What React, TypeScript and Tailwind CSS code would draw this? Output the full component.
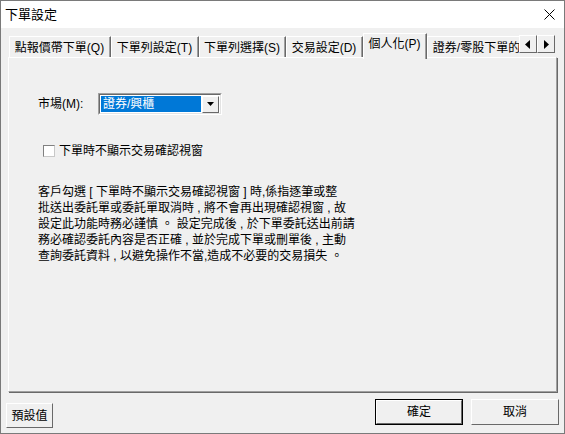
import React from 'react';

const font = "font-['Liberation_Sans','Noto_Sans_CJK_TC',sans-serif]";

interface Tab {
  label: string;
  width: string;
  active?: boolean;
}

const tabs: Tab[] = [
  { label: '點報價帶下單(Q)', width: 'w-[102px]' },
  { label: '下單列設定(T)', width: 'w-[88px]' },
  { label: '下單列選擇(S)', width: 'w-[87px]' },
  { label: '交易設定(D)', width: 'w-[77px]' },
  { label: '個人化(P)', width: 'w-[64px]', active: true },
  { label: '證券/零股下單的', width: 'w-[100px]' },
];

const notice = [
  '客戶勾選 [ 下單時不顯示交易確認視窗 ] 時,係指逐筆或整',
  '批送出委託單或委託單取消時 , 將不會再出現確認視窗 , 故',
  '設定此功能時務必謹慎 。 設定完成後 , 於下單委託送出前請',
  '務必確認委託內容是否正確 , 並於完成下單或刪單後 , 主動',
  '查詢委託資料 , 以避免操作不當,造成不必要的交易損失 。',
];

function TabItem({ tab }: { tab: Tab }) {
  if (tab.active) {
    return (
      <div className={`${tab.width} h-[26px] -mb-[2px] relative z-10 shrink-0 bg-[#f0f0f0] border-t border-l border-r border-t-white border-l-white border-r-[#696969]`}>
        <div className="h-full border-r border-r-[#a0a0a0] flex justify-center pt-[2px] leading-[16px] text-[12px] whitespace-nowrap">
          {tab.label}
        </div>
      </div>
    );
  }
  return (
    <div className={`${tab.width} h-[21px] shrink-0 bg-[#f0f0f0] border-t border-l border-r border-t-white border-l-white border-r-[#696969]`}>
      <div className="h-full border-r border-r-[#a0a0a0] flex justify-center pt-[3px] leading-[16px] text-[12px] whitespace-nowrap overflow-hidden">
        {tab.label}
      </div>
    </div>
  );
}

function ArrowButton({ dir }: { dir: 'left' | 'right' }) {
  return (
    <div className="w-[18px] h-[18px] bg-[#f0f0f0] border border-t-white border-l-white border-r-[#696969] border-b-[#696969] flex items-center justify-center">
      <svg width="6" height="9" viewBox="0 0 6 9">
        {dir === 'left' ? <polygon points="5,0 5,9 0,4.5" fill="#000" /> : <polygon points="1,0 1,9 6,4.5" fill="#000" />}
      </svg>
    </div>
  );
}

function Button({ label, primary, className }: { label: string; primary?: boolean; className: string }) {
  return (
    <div className={`${className} ${primary ? 'border border-[#000]' : ''}`}>
      <div className="h-full w-full bg-[#f0f0f0] border border-t-white border-l-white border-r-[#696969] border-b-[#696969] flex items-center justify-center text-[12px] leading-[16px]">
        {label}
      </div>
    </div>
  );
}

export default function App() {
  return (
    <div className={`${font} w-[565px] h-[434px] bg-[#f0f0f0] border border-[#7a7a7a] text-black flex flex-col overflow-hidden`}>
      {/* Title bar */}
      <div className="h-[27px] bg-white flex items-center justify-between pl-[4px] pr-[9px] shrink-0">
        <span className="text-[13px] leading-[16px]">下單設定</span>
        <svg width="11" height="11" viewBox="0 0 11 11">
          <path d="M0.5 0.5 L10.5 10.5 M10.5 0.5 L0.5 10.5" stroke="#000" strokeWidth="1" />
        </svg>
      </div>

      {/* Tab strip */}
      <div className="mt-[5px] h-[24px] pl-[8px] flex items-end shrink-0 relative z-10">
        <div className="w-[510px] h-full flex items-end overflow-x-clip shrink-0">
          {tabs.map((t) => (
            <TabItem key={t.label} tab={t} />
          ))}
        </div>
        <div className="self-start mt-[2px] flex">
          <ArrowButton dir="left" />
          <ArrowButton dir="right" />
        </div>
      </div>

      {/* Panel */}
      <div className="ml-[7px] w-[549px] h-[335px] shrink-0 border border-t-white border-l-white border-r-[#a0a0a0] border-b-[#a0a0a0] shadow-[1px_1px_0_#696969] flex flex-col">
        <div className="mt-[35px] pl-[29px] flex items-center">
          <span className="text-[12px] leading-[16px] w-[60px]">市場(M):</span>
          <div className="w-[124px] h-[22px] border border-t-[#a0a0a0] border-l-[#a0a0a0] border-r-white border-b-white">
            <div className="h-full border border-t-[#696969] border-l-[#696969] border-r-[#e3e3e3] border-b-[#e3e3e3] bg-white flex items-center pl-[1px] pr-[1px]">
              <div className="w-[101px] h-[16px] bg-[#0078d7] text-white text-[12px] leading-[16px] pl-[2px]">證券/興櫃</div>
              <div className="ml-[1px] w-[17px] h-[17px] bg-[#f0f0f0] border border-t-white border-l-white border-r-[#696969] border-b-[#696969] flex items-center justify-center">
                <svg width="7" height="4" viewBox="0 0 7 4">
                  <polygon points="0,0 7,0 3.5,4" fill="#000" />
                </svg>
              </div>
            </div>
          </div>
        </div>

        <div className="mt-[28px] pl-[34px] flex items-center">
          <div className="w-[12px] h-[12px] bg-white border border-t-[#808080] border-l-[#808080] border-r-[#c8c8c8] border-b-[#c8c8c8]" />
          <span className="ml-[4px] text-[12px] leading-[16px]">下單時不顯示交易確認視窗</span>
        </div>

        <div className="mt-[25px] pl-[29px] flex flex-col">
          {notice.map((line) => (
            <div key={line} className="text-[12px] leading-[16px] whitespace-pre">
              {line}
            </div>
          ))}
        </div>
      </div>

      {/* Buttons */}
      <div className="flex items-start pl-[5px] mt-[7px]">
        <Button label="預設值" className="mt-[4px] w-[47px] h-[25px]" />
        <div className="ml-auto flex gap-[8px] pr-[5px]">
          <Button label="確定" primary className="w-[88px] h-[26px]" />
          <Button label="取消" className="w-[88px] h-[26px]" />
        </div>
      </div>
    </div>
  );
}
